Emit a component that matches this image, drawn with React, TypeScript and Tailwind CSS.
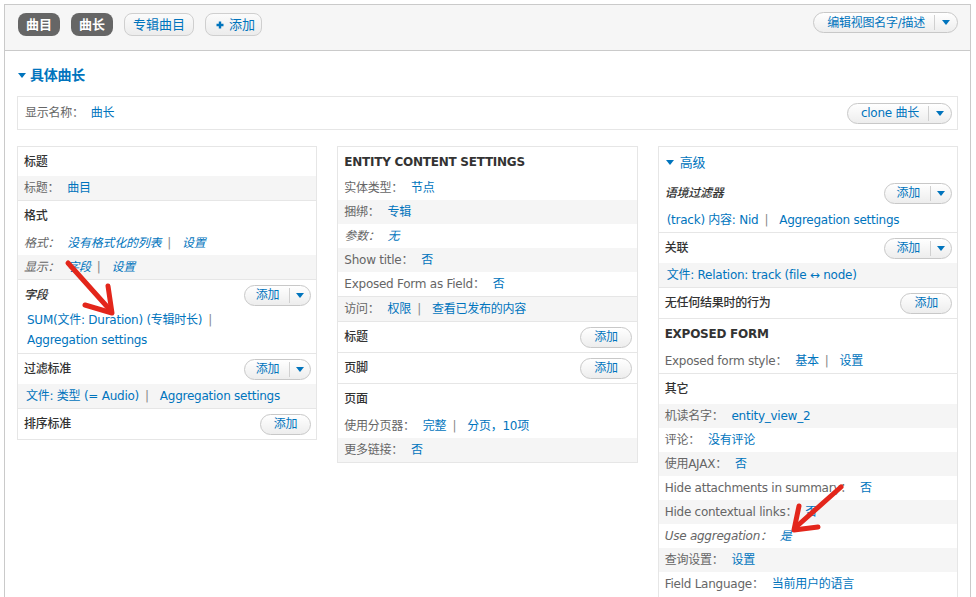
import React from 'react';

const font = "font-['DejaVu_Sans','Noto_Sans_CJK_SC',sans-serif]";

const Caret = () => (
  <span className="block w-0 h-0 border-x-[4px] border-x-transparent border-t-[5px] border-t-[#0074bd]" />
);

const Link = ({ children }: { children: React.ReactNode }) => (
  <span className="text-[#0074bd]">{children}</span>
);

const Sep = () => <span className="ml-[6px] mr-[11px] text-[#888]">|</span>;

const AddButton: React.FC<{ split?: boolean }> = ({ split }) => (
  <div className="flex items-center h-[21px] rounded-full border border-[#c8c8c8] bg-linear-to-b from-white to-[#ededed] text-[#0074bd] text-[12px] not-italic font-normal">
    <span className={split ? 'pl-[11px] pr-[10px]' : 'px-[13px]'}>添加</span>
    {split && (
      <span className="flex items-center h-[15px] border-l border-[#d0d0d0] px-[6px]">
        <Caret />
      </span>
    )}
  </div>
);

const Header: React.FC<{
  title: string;
  italic?: boolean;
  upper?: boolean;
  first?: boolean;
  button?: 'split' | 'single';
}> = ({ title, italic, upper, first, button }) => (
  <div className={`flex items-center justify-between ${first ? 'h-[29px]' : 'h-[30px]'} pl-[6px] pr-[5px]`}>
    <span className={`text-[#333] ${italic ? 'italic' : ''} ${upper ? 'font-bold' : 'font-medium'}`}>
      {title}
    </span>
    {button && <AddButton split={button === 'split'} />}
  </div>
);

const Row: React.FC<{
  label?: string;
  gray?: boolean;
  italic?: boolean;
  children: React.ReactNode;
}> = ({ label, gray, italic, children }) => (
  <div
    className={`flex items-center min-h-[24px] py-[2px] ${label ? 'pl-[6px]' : 'pl-[8px]'} pr-[6px] ${gray ? 'bg-[#f5f5f5]' : ''} ${italic ? 'italic' : ''}`}
  >
    {label && <span className="text-[#666] whitespace-nowrap">{label}：</span>}
    <span className={label ? 'ml-[8px]' : ''}>{children}</span>
  </div>
);

const Section: React.FC<{ first?: boolean; children: React.ReactNode }> = ({ first, children }) => (
  <div className={first ? '' : 'border-t border-[#e6e6e6]'}>{children}</div>
);

const Column: React.FC<{ children: React.ReactNode }> = ({ children }) => (
  <div className="border border-[#e6e6e6] bg-white">{children}</div>
);

const SplitTop: React.FC<{ label: string; className?: string }> = ({ label, className }) => (
  <div
    className={`flex items-center h-[21px] rounded-full border border-[#c8c8c8] bg-linear-to-b from-white to-[#ededed] text-[#0074bd] text-[12px] ${className ?? ''}`}
  >
    <span className="pl-[13px] pr-[9px]">{label}</span>
    <span className="flex items-center h-[15px] border-l border-[#d0d0d0] px-[7px]">
      <Caret />
    </span>
  </div>
);

export default function App() {
  return (
    <div className={`relative w-[976px] h-[597px] overflow-hidden bg-white text-[12px] leading-[20px] tracking-[-0.25px] ${font}`}>
      <div className="ml-[4px] mr-[5px] mt-[4px] border-x border-t border-[#cacaca] min-h-[600px]">
        {/* tab bar */}
        <div className="flex items-start justify-between h-[46px] bg-[#f6f6f6] border-b border-[#cacaca] pt-[8px] px-[13px]">
          <div className="flex items-center gap-[11px] text-[13px] tracking-normal">
            <span className="flex items-center h-[23px] px-[8px] rounded-[8px] bg-[#666] text-white font-semibold">曲目</span>
            <span className="flex items-center h-[23px] px-[8px] rounded-[8px] bg-[#666] text-white font-semibold">曲长</span>
            <span className="flex items-center h-[23px] px-[8px] rounded-[8px] border border-[#cfcfcf] bg-linear-to-b from-[#fbfbfb] to-[#ececec] text-[#0074bd]">专辑曲目</span>
            <span className="flex items-center gap-[5px] h-[23px] pl-[10px] pr-[6px] rounded-[8px] border border-[#cfcfcf] bg-linear-to-b from-[#fbfbfb] to-[#ececec] text-[#0074bd]">
              <svg width="8" height="8" viewBox="0 0 8 8">
                <path d="M4 0.5v7M0.5 4h7" stroke="#0074bd" strokeWidth="2.4" />
              </svg>
              添加
            </span>
          </div>
          <SplitTop label="编辑视图名字/描述" className="-mt-[1px] -mr-[1px]" />
        </div>

        {/* body */}
        <div className="px-[12px] pt-[15px] pb-[20px]">
          <div className="flex items-center gap-[4px] h-[18px] text-[14px] font-semibold text-[#0074bd]">
            <span className="block w-0 h-0 border-x-[4px] border-x-transparent border-t-[5px] border-t-[#0074bd] ml-[1px]" />
            具体曲长
          </div>

          <div className="mt-[12px] h-[34px] border border-[#e6e6e6] flex items-center justify-between pl-[7px] pr-[5px]">
            <div>
              <span className="text-[#666]">显示名称：</span>
              <span className="ml-[7px] text-[#0074bd]">曲长</span>
            </div>
            <SplitTop label="clone 曲长" />
          </div>

          <div className="mt-[16px] grid grid-cols-3 gap-x-[20px] items-start">
            {/* left column */}
            <Column>
              <Section first>
                <Header title="标题" first />
                <Row label="标题" gray>
                  <Link>曲目</Link>
                </Row>
              </Section>
              <Section>
                <Header title="格式" />
                <Row label="格式" italic>
                  <Link>没有格式化的列表</Link>
                  <Sep />
                  <Link>设置</Link>
                </Row>
                <Row label="显示" gray italic>
                  <Link>字段</Link>
                  <Sep />
                  <Link>设置</Link>
                </Row>
              </Section>
              <Section>
                <Header title="字段" italic button="split" />
                <div className="pl-[9px] pt-[0px] pb-[3px]">
                  <Link>SUM(文件: Duration) (专辑时长)</Link>
                  <span className="ml-[6px] text-[#888]">|</span>
                  <br />
                  <Link>Aggregation settings</Link>
                </div>
              </Section>
              <Section>
                <Header title="过滤标准" button="split" />
                <Row gray>
                  <Link>文件: 类型 (= Audio)</Link>
                  <Sep />
                  <Link>Aggregation settings</Link>
                </Row>
              </Section>
              <Section>
                <Header title="排序标准" button="single" />
              </Section>
            </Column>

            {/* middle column */}
            <Column>
              <Section first>
                <Header title="ENTITY CONTENT SETTINGS" upper first />
                <Row label="实体类型">
                  <Link>节点</Link>
                </Row>
                <Row label="捆绑" gray>
                  <Link>专辑</Link>
                </Row>
                <Row label="参数" italic>
                  <Link>无</Link>
                </Row>
                <Row label="Show title" gray>
                  <Link>否</Link>
                </Row>
                <Row label="Exposed Form as Field">
                  <Link>否</Link>
                </Row>
              </Section>
              <Section>
                <Row label="访问" gray>
                  <Link>权限</Link>
                  <Sep />
                  <Link>查看已发布的内容</Link>
                </Row>
              </Section>
              <Section>
                <Header title="标题" button="single" />
              </Section>
              <Section>
                <Header title="页脚" button="single" />
              </Section>
              <Section>
                <Header title="页面" />
                <Row label="使用分页器">
                  <Link>完整</Link>
                  <Sep />
                  <Link>分页，10项</Link>
                </Row>
                <Row label="更多链接" gray>
                  <Link>否</Link>
                </Row>
              </Section>
            </Column>

            {/* right column */}
            <Column>
              <div className="flex items-center gap-[6px] h-[31px] pl-[7px] text-[13px] text-[#0074bd]">
                <span className="block w-0 h-0 border-x-[4px] border-x-transparent border-t-[5px] border-t-[#0074bd]" />
                高级
              </div>
              <Section first>
                <Header title="语境过滤器" italic button="split" />
                <Row>
                  <Link>(track) 内容: Nid</Link>
                  <Sep />
                  <Link>Aggregation settings</Link>
                </Row>
              </Section>
              <Section>
                <Header title="关联" button="split" />
                <Row gray>
                  <Link>文件: Relation: track (file ↔ node)</Link>
                </Row>
              </Section>
              <Section>
                <Header title="无任何结果时的行为" button="single" />
              </Section>
              <Section>
                <Header title="EXPOSED FORM" upper />
                <Row label="Exposed form style">
                  <Link>基本</Link>
                  <Sep />
                  <Link>设置</Link>
                </Row>
              </Section>
              <Section>
                <Header title="其它" />
                <Row label="机读名字" gray>
                  <Link>entity_view_2</Link>
                </Row>
                <Row label="评论">
                  <Link>没有评论</Link>
                </Row>
                <Row label="使用AJAX" gray>
                  <Link>否</Link>
                </Row>
                <Row label="Hide attachments in summary">
                  <Link>否</Link>
                </Row>
                <Row label="Hide contextual links" gray>
                  <Link>否</Link>
                </Row>
                <Row label="Use aggregation" italic>
                  <Link>是</Link>
                </Row>
                <Row label="查询设置" gray>
                  <Link>设置</Link>
                </Row>
                <Row label="Field Language">
                  <Link>当前用户的语言</Link>
                </Row>
                <div className="h-[8px]" />
              </Section>
            </Column>
          </div>
        </div>
      </div>

      {/* red annotation arrows */}
      <svg className="absolute inset-0 pointer-events-none" width="976" height="597" viewBox="0 0 976 597">
        <g stroke="#e3261b" strokeWidth="5" strokeLinecap="round" strokeLinejoin="round" fill="none">
          <path d="M68 263 L111 311" />
          <path d="M85 305 L112 313 L108 286" />
          <path d="M841 487 L796 527" />
          <path d="M818 527 L794 530 L799 506" />
        </g>
      </svg>
    </div>
  );
}
